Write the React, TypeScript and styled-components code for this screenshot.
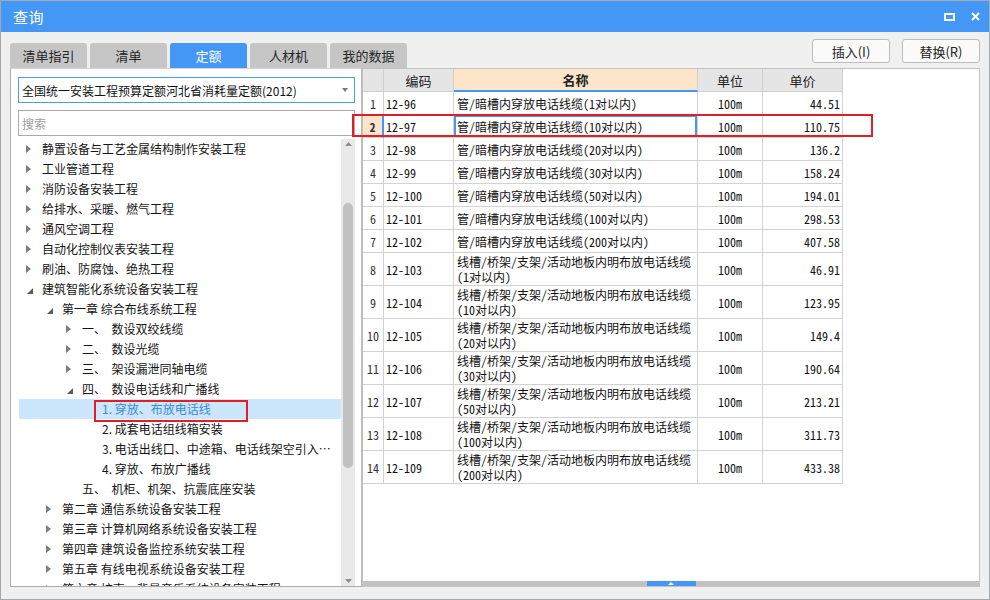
import React from 'react';
import styled, { createGlobalStyle } from 'styled-components';

const GlobalStyle = createGlobalStyle`
  html, body { margin: 0; padding: 0; background: #ffffff; }
  body { font-family: "Noto Sans CJK SC", "Microsoft YaHei", sans-serif; }
  *, *::before, *::after { box-sizing: border-box; }
`;

const BLUE = '#4597f6';

const Window = styled.div`
  position: relative;
  width: 990px;
  height: 600px;
  border: 1px solid #a3a9b0;
  background: #f0f0f0;
  display: flex;
  flex-direction: column;
`;

const TitleBar = styled.header`
  height: 31px;
  flex: none;
  background: ${BLUE};
  color: #fff;
  display: flex;
  align-items: center;
  padding: 0 9px 0 12px;
  font-size: 15px;
`;

const TitleText = styled.span`
  flex: 1;
  letter-spacing: 0.5px;
`;

const WinControls = styled.div`
  display: flex;
  align-items: center;
  gap: 16px;
`;

const TopRow = styled.div`
  height: 36px;
  flex: none;
  display: flex;
  align-items: flex-end;
  padding: 0 9px 0 9px;
`;

const Tabs = styled.nav`
  display: flex;
  gap: 3px;
`;

const Tab = styled.div<{ $active?: boolean }>`
  width: 77px;
  height: 25px;
  border-radius: 3px 3px 0 0;
  background: ${(p) => (p.$active ? BLUE : '#c6c6c6')};
  color: ${(p) => (p.$active ? '#ffffff' : '#262626')};
  font-size: 13px;
  display: flex;
  align-items: center;
  justify-content: center;
`;

const Actions = styled.div`
  margin-left: auto;
  align-self: flex-start;
  margin-top: 7px;
  display: flex;
  gap: 12px;
`;

const Button = styled.button`
  width: 78px;
  height: 24px;
  border: 1px solid #bdbdbd;
  border-radius: 3px;
  background: #fafafa;
  font-family: inherit;
  font-size: 13px;
  color: #222;
  padding: 0;
`;

const Main = styled.div`
  height: 519px;
  flex: none;
  display: flex;
  padding: 0 9px;
`;

const Footer = styled.div`
  flex: 1;
`;

const LeftPane = styled.section`
  width: 351px;
  flex: none;
  background: #fff;
  border: 1px solid #ababab;
  border-top-color: #d4d4d4;
  border-right: none;
  display: flex;
  flex-direction: column;
  padding: 8px 6px 0 7px;
`;

const Select = styled.div`
  height: 26px;
  flex: none;
  border: 1px solid #4a9af2;
  display: flex;
  align-items: center;
  padding: 0 6px 0 3px;
  font-size: 12px;
  color: #111;
`;

const SelectText = styled.span`
  flex: 1;
`;

const Search = styled.div`
  height: 26px;
  flex: none;
  margin-top: 7px;
  border: 1px solid #ababab;
  display: flex;
  align-items: center;
  padding-left: 3px;
  font-size: 12px;
  color: #a0a0a0;
`;

const TreeBox = styled.div`
  flex: 1;
  margin-top: 3px;
  display: flex;
  min-height: 0;
`;

const TreeList = styled.div`
  flex: 1;
  margin-left: 1px;
  overflow: hidden;
`;

const TreeRow = styled.div<{ $level: number; $selected?: boolean }>`
  height: 20px;
  display: flex;
  align-items: center;
  padding-left: ${(p) => 7 + p.$level * 20}px;
  padding-right: 10px;
  background: ${(p) => (p.$selected ? '#cce6fb' : 'transparent')};
  color: ${(p) => (p.$selected ? '#3a8ae0' : '#141414')};
  font-size: 12px;
`;

const Toggle = styled.span<{ $open?: boolean }>`
  width: 16px;
  flex: none;
  display: flex;
  align-items: center;
  padding-left: ${(p) => (p.$open ? 1 : 0)}px;
  padding-top: ${(p) => (p.$open ? 3 : 0)}px;
`;

const TreeLabel = styled.span`
  white-space: pre;
  overflow: hidden;
  text-overflow: ellipsis;
  line-height: 20px;
`;

const Scrollbar = styled.div`
  width: 14px;
  flex: none;
  background: #e9e9e9;
  display: flex;
  flex-direction: column;
  align-items: center;
`;

const ScrollArrow = styled.div<{ $down?: boolean }>`
  height: 14px;
  flex: none;
  display: flex;
  justify-content: center;
  align-items: ${(p) => (p.$down ? 'flex-end' : 'flex-start')};
  padding: ${(p) => (p.$down ? '0 0 3px' : '3px 0 0')};
`;

const Thumb = styled.div`
  width: 10px;
  height: 265px;
  margin-top: 50px;
  border-radius: 5px;
  background: #c1c1c1;
`;

const Spacer = styled.div`
  flex: 1;
`;

const RightPane = styled.section`
  flex: 1;
  display: flex;
  flex-direction: column;
  background: #fff;
  border: 1px solid #c4c4c4;
  border-left: 2px solid #bdbdbd;
`;

const TableArea = styled.div`
  flex: 1;
`;

const Grid = styled.div`
  width: 480px;
  display: grid;
  grid-template-columns: 21px 70px 244px 65px 80px;
  grid-template-rows: 23px repeat(7, 23px) repeat(7, 33px);
`;

const HeadCell = styled.div<{ $accent?: boolean }>`
  background: ${(p) => (p.$accent ? '#fde5c9' : '#e5e5e5')};
  border-right: 1px solid #cfcfcf;
  border-bottom: ${(p) => (p.$accent ? `2px solid ${BLUE}` : '1px solid #cfcfcf')};
  font-size: 13px;
  font-weight: ${(p) => (p.$accent ? 700 : 400)};
  color: #222;
  display: flex;
  align-items: center;
  justify-content: center;
`;

const Cell = styled.div<{ $align?: 'left' | 'center' | 'right'; $sel?: boolean; $head?: boolean; $cur?: boolean }>`
  border-right: ${(p) => (p.$cur ? `2px solid ${BLUE}` : '1px solid #d2d2d2')};
  border-bottom: 1px solid #d2d2d2;
  background: ${(p) => (p.$cur ? '#fde5c9' : '#fff')};
  box-shadow: ${(p) => (p.$sel ? `inset 0 0 0 2px ${BLUE}` : 'none')};
  font-family: "Noto Sans Mono CJK SC", "Noto Sans CJK SC", monospace;
  font-size: 12px;
  font-weight: ${(p) => (p.$cur ? 700 : 400)};
  line-height: 15px;
  color: ${(p) => (p.$head ? '#333' : '#111')};
  display: flex;
  flex-direction: column;
  justify-content: center;
  align-items: ${(p) => (p.$align === 'center' ? 'center' : p.$align === 'right' ? 'flex-end' : 'flex-start')};
  padding: ${(p) => (p.$align === 'right' ? '0 2px 0 0' : p.$align === 'center' ? '0' : p.$head ? '0' : '0 0 0 2px')};
  white-space: pre;
`;

const NameCell = styled(Cell)`
  padding-left: 3px;
`;

const BottomBar = styled.div`
  height: 5px;
  flex: none;
  background: #c2c2c2;
  display: flex;
  justify-content: center;
`;

const Handle = styled.div`
  width: 49px;
  background: ${BLUE};
  display: flex;
  align-items: center;
  justify-content: center;
`;

const Mark = styled.div`
  position: absolute;
  border: 2px solid #e31d25;
  pointer-events: none;
`;

const Collapsed = () => (
  <svg width="5" height="8" viewBox="0 0 5 8">
    <path d="M0 0 L5 4 L0 8 Z" fill="#7d7d7d" />
  </svg>
);

const Expanded = () => (
  <svg width="6" height="6" viewBox="0 0 6 6">
    <path d="M6 0 L6 6 L0 6 Z" fill="#5a5a5a" />
  </svg>
);

type Node = { level: number; text: string; state: 'c' | 'e' | 'l'; selected?: boolean };

const tree: Node[] = [
  { level: 0, text: '静置设备与工艺金属结构制作安装工程', state: 'c' },
  { level: 0, text: '工业管道工程', state: 'c' },
  { level: 0, text: '消防设备安装工程', state: 'c' },
  { level: 0, text: '给排水、采暖、燃气工程', state: 'c' },
  { level: 0, text: '通风空调工程', state: 'c' },
  { level: 0, text: '自动化控制仪表安装工程', state: 'c' },
  { level: 0, text: '刷油、防腐蚀、绝热工程', state: 'c' },
  { level: 0, text: '建筑智能化系统设备安装工程', state: 'e' },
  { level: 1, text: '第一章 综合布线系统工程', state: 'e' },
  { level: 2, text: '一、  数设双绞线缆', state: 'c' },
  { level: 2, text: '二、  数设光缆', state: 'c' },
  { level: 2, text: '三、  架设漏泄同轴电缆', state: 'c' },
  { level: 2, text: '四、  数设电话线和广播线', state: 'e' },
  { level: 3, text: '1. 穿放、布放电话线', state: 'l', selected: true },
  { level: 3, text: '2. 成套电话组线箱安装', state: 'l' },
  { level: 3, text: '3. 电话出线口、中途箱、电话线架空引入装置安装', state: 'l' },
  { level: 3, text: '4. 穿放、布放广播线', state: 'l' },
  { level: 2, text: '五、  机柜、机架、抗震底座安装', state: 'l' },
  { level: 1, text: '第二章 通信系统设备安装工程', state: 'c' },
  { level: 1, text: '第三章 计算机网络系统设备安装工程', state: 'c' },
  { level: 1, text: '第四章 建筑设备监控系统安装工程', state: 'c' },
  { level: 1, text: '第五章 有线电视系统设备安装工程', state: 'c' },
  { level: 1, text: '第六章 扩声、背景音乐系统设备安装工程', state: 'c' },
];

const A = '管/暗槽内穿放电话线缆';
const B = '线槽/桥架/支架/活动地板内明布放电话线缆';

const rows: { code: string; name: string[]; unit: string; price: string }[] = [
  { code: '12-96', name: [A + '(1对以内)'], unit: '100m', price: '44.51' },
  { code: '12-97', name: [A + '(10对以内)'], unit: '100m', price: '110.75' },
  { code: '12-98', name: [A + '(20对以内)'], unit: '100m', price: '136.2' },
  { code: '12-99', name: [A + '(30对以内)'], unit: '100m', price: '158.24' },
  { code: '12-100', name: [A + '(50对以内)'], unit: '100m', price: '194.01' },
  { code: '12-101', name: [A + '(100对以内)'], unit: '100m', price: '298.53' },
  { code: '12-102', name: [A + '(200对以内)'], unit: '100m', price: '407.58' },
  { code: '12-103', name: [B, '(1对以内)'], unit: '100m', price: '46.91' },
  { code: '12-104', name: [B, '(10对以内)'], unit: '100m', price: '123.95' },
  { code: '12-105', name: [B, '(20对以内)'], unit: '100m', price: '149.4' },
  { code: '12-106', name: [B, '(30对以内)'], unit: '100m', price: '190.64' },
  { code: '12-107', name: [B, '(50对以内)'], unit: '100m', price: '213.21' },
  { code: '12-108', name: [B, '(100对以内)'], unit: '100m', price: '311.73' },
  { code: '12-109', name: [B, '(200对以内)'], unit: '100m', price: '433.38' },
];

export default function App() {
  return (
    <>
      <GlobalStyle />
      <Window>
        <TitleBar>
          <TitleText>查询</TitleText>
          <WinControls>
            <svg width="11" height="8" viewBox="0 0 11 8">
              <rect x="1" y="1" width="9" height="6" fill="none" stroke="#fff" strokeWidth="2" />
            </svg>
            <svg width="9" height="9" viewBox="0 0 9 9">
              <path d="M1 1 L8 8 M8 1 L1 8" stroke="#fff" strokeWidth="2" />
            </svg>
          </WinControls>
        </TitleBar>

        <TopRow>
          <Tabs>
            <Tab>清单指引</Tab>
            <Tab>清单</Tab>
            <Tab $active>定额</Tab>
            <Tab>人材机</Tab>
            <Tab>我的数据</Tab>
          </Tabs>
          <Actions>
            <Button>插入(I)</Button>
            <Button>替换(R)</Button>
          </Actions>
        </TopRow>

        <Main>
          <LeftPane>
            <Select>
              <SelectText>全国统一安装工程预算定额河北省消耗量定额(2012)</SelectText>
              <svg width="6" height="4" viewBox="0 0 6 4">
                <path d="M0 0 L6 0 L3 4 Z" fill="#7a7a7a" />
              </svg>
            </Select>
            <Search>搜索</Search>
            <TreeBox>
              <TreeList>
                {tree.map((n, i) => (
                  <TreeRow key={i} $level={n.level} $selected={n.selected}>
                    <Toggle $open={n.state === 'e'}>
                      {n.state === 'c' && <Collapsed />}
                      {n.state === 'e' && <Expanded />}
                    </Toggle>
                    <TreeLabel>{n.text}</TreeLabel>
                  </TreeRow>
                ))}
              </TreeList>
              <Scrollbar>
                <ScrollArrow>
                  <svg width="7" height="4" viewBox="0 0 7 4">
                    <path d="M0 4 L3.5 0 L7 4 Z" fill="#8c8c8c" />
                  </svg>
                </ScrollArrow>
                <Thumb />
                <Spacer />
                <ScrollArrow $down>
                  <svg width="7" height="4" viewBox="0 0 7 4">
                    <path d="M0 0 L7 0 L3.5 4 Z" fill="#8c8c8c" />
                  </svg>
                </ScrollArrow>
              </Scrollbar>
            </TreeBox>
          </LeftPane>

          <RightPane>
            <TableArea>
              <Grid>
                <HeadCell />
                <HeadCell>编码</HeadCell>
                <HeadCell $accent>名称</HeadCell>
                <HeadCell>单位</HeadCell>
                <HeadCell>单价</HeadCell>
                {rows.map((r, i) => {
                  const cur = i === 1;
                  return (
                    <React.Fragment key={r.code}>
                      <Cell $head $align="center" $cur={cur}>{String(i + 1)}</Cell>
                      <Cell>{r.code}</Cell>
                      <NameCell $sel={cur}>
                        {r.name.map((line, k) => (
                          <span key={k}>{line}</span>
                        ))}
                      </NameCell>
                      <Cell $align="center">{r.unit}</Cell>
                      <Cell $align="right">{r.price}</Cell>
                    </React.Fragment>
                  );
                })}
              </Grid>
            </TableArea>
            <BottomBar>
              <Handle>
                <svg width="6" height="3" viewBox="0 0 6 3">
                  <path d="M0 3 L3 0 L6 3 Z" fill="#ffffff" />
                </svg>
              </Handle>
            </BottomBar>
          </RightPane>
        </Main>
        <Footer />

        <Mark style={{ left: 351, top: 113, width: 521, height: 23 }} />
        <Mark style={{ left: 93, top: 399, width: 154, height: 22 }} />
      </Window>
    </>
  );
}
